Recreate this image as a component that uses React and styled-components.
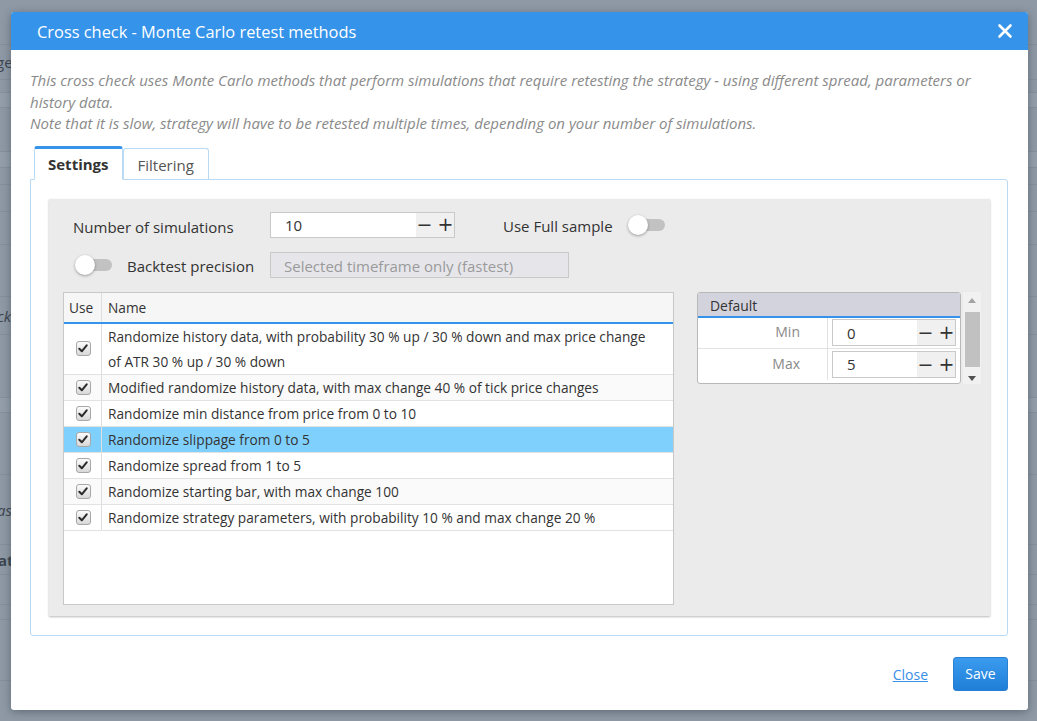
import React from "react";
import styled, { createGlobalStyle } from "styled-components";

const Global = createGlobalStyle`
  html, body { margin: 0; padding: 0; }
  body {
    width: 1037px; height: 721px; overflow: hidden;
    background: #8e99a5;
    font-family: "Open Sans", "Noto Sans", Arial, sans-serif;
    color: #333;
  }
  * { box-sizing: border-box; }
`;

const Screen = styled.div`
  position: relative;
  width: 1037px;
  height: 721px;
  overflow: hidden;
`;

const BehindPage = styled.div`
  display: flex;
  flex-direction: column;
  width: 1037px;
  height: 721px;
  background: #8e99a5;
`;

const BehindRow = styled.div`
  height: ${(p) => p.$h}px;
  flex: none;
  border-bottom: 1px solid #85909c;
  background: ${(p) => (p.$light ? "#939eaa" : "transparent")};
  display: flex;
  align-items: center;
  font-size: 15px;
  color: #3d4650;
  font-style: ${(p) => (p.$italic ? "italic" : "normal")};
  font-weight: ${(p) => (p.$bold ? 700 : 400)};
  white-space: nowrap;
`;

const BehindText = styled.span`
  margin-left: ${(p) => p.$x}px;
`;

const Overlay = styled.div`
  position: absolute;
  inset: 0;
  padding: 12px 9px 11px 11px;
`;

const Modal = styled.div`
  width: 1017px;
  height: 698px;
  background: #fff;
  border-radius: 3px;
  box-shadow: 0 2px 8px rgba(40, 50, 60, 0.45);
  display: flex;
  flex-direction: column;
  overflow: hidden;
`;

const Header = styled.div`
  height: 38px;
  flex: none;
  background: #3593e9;
  display: flex;
  align-items: center;
  justify-content: space-between;
  padding: 0 15px 0 26px;
`;

const Title = styled.div`
  color: #fff;
  font-size: 16.4px;
`;

const CloseX = styled.svg`
  width: 16px;
  height: 16px;
  display: block;
`;

const Body = styled.div`
  flex: 1;
  display: flex;
  flex-direction: column;
  padding: 20px 20px 0 19px;
`;

const Description = styled.div`
  font-size: 15px;
  font-style: italic;
  line-height: 21.5px;
  color: #8a8a8a;
  padding-right: 20px;
`;

const Tabs = styled.div`
  display: flex;
  margin: 11px 0 0 4px;
  align-items: flex-end;
  height: 33px;
`;

const Tab = styled.div`
  height: ${(p) => (p.$active ? 34 : 31)}px;
  padding: 0 ${(p) => (p.$active ? 13 : 14)}px;
  display: flex;
  align-items: center;
  font-size: 15px;
  font-weight: ${(p) => (p.$active ? 700 : 400)};
  color: ${(p) => (p.$active ? "#333" : "#555")};
  background: #fff;
  border: 1px solid #b9daf5;
  border-top: ${(p) => (p.$active ? "3px solid #3593e9" : "1px solid #b9daf5")};
  border-bottom: ${(p) => (p.$active ? "1px solid #fff" : "none")};
  border-radius: 3px 3px 0 0;
  margin-bottom: ${(p) => (p.$active ? -1 : 0)}px;
  position: relative;
  z-index: ${(p) => (p.$active ? 1 : 0)};
  padding-top: ${(p) => (p.$active ? 0 : 2)}px;
`;

const TabPanel = styled.div`
  height: 457px;
  flex: none;
  border: 1px solid #b9daf5;
  border-radius: 0 3px 3px 3px;
  padding: 19px 17px 19px 18px;
`;

const GrayPanel = styled.div`
  height: 100%;
  background: #ebebeb;
  box-shadow: 0 1px 2px rgba(0, 0, 0, 0.28);
  padding: 13px 8px 12px 14px;
  display: flex;
  flex-direction: column;
`;

const FormRow = styled.div`
  display: flex;
  align-items: center;
  height: 26px;
  margin-bottom: ${(p) => p.$mb || 0}px;
  padding-left: ${(p) => p.$pl || 0}px;
`;

const Label = styled.div`
  font-size: 15px;
  color: #333;
  width: ${(p) => (p.$w ? p.$w + "px" : "auto")};
  margin-left: ${(p) => p.$ml || 0}px;
  flex: none;
  padding-top: ${(p) => p.$pt ?? 2}px;
`;

const Spinner = styled.div`
  display: flex;
  width: ${(p) => p.$w}px;
  height: ${(p) => p.$h || 26}px;
  border: 1px solid #c9c9c9;
  background: #fff;
  flex: none;
`;

const SpinValue = styled.div`
  flex: 1;
  font-size: 15px;
  color: #333;
  padding-left: 14px;
  display: flex;
  align-items: center;
`;

const SpinButtons = styled.div`
  width: 38px;
  background: #f0f0f0;
  display: flex;
  align-items: center;
  justify-content: center;
  gap: 5px;
  font-size: 19px;
  color: #333;
  line-height: 1;
  font-family: "DejaVu Sans", sans-serif;
`;

const Toggle = styled.div`
  position: relative;
  width: 37px;
  height: 20px;
  flex: none;
  margin-left: ${(p) => p.$ml || 0}px;
  &::before {
    content: "";
    position: absolute;
    left: 2px;
    right: 0;
    top: 4px;
    height: 12px;
    border-radius: 6px;
    background: #c2c2c2;
  }
  &::after {
    content: "";
    position: absolute;
    left: 0;
    top: 0;
    width: 20px;
    height: 20px;
    border-radius: 50%;
    background: #fff;
    box-shadow: 0 1px 3px rgba(0, 0, 0, 0.35);
  }
`;

const DisabledSelect = styled.div`
  width: 299px;
  height: 26px;
  border: 1px solid #c9c9c9;
  background: #e6e6ea;
  color: #9a9a9a;
  font-size: 15px;
  display: flex;
  align-items: center;
  padding: 2px 0 0 13px;
  flex: none;
`;

const Lower = styled.div`
  flex: 1;
  display: flex;
  margin-top: 14px;
  align-items: flex-start;
`;

const Table = styled.div`
  width: 611px;
  height: 313px;
  border: 1px solid #c8c8c8;
  background: #fff;
  flex: none;
  display: flex;
  flex-direction: column;
`;

const HeadRow = styled.div`
  display: flex;
  height: 31px;
  background: #f6f6f6;
  border-bottom: 2px solid #3593e9;
  font-size: 13.7px;
  color: #333;
  flex: none;
`;

const HeadCell = styled.div`
  width: ${(p) => (p.$w ? p.$w + "px" : "auto")};
  flex: ${(p) => (p.$w ? "none" : 1)};
  display: flex;
  align-items: center;
  padding-left: ${(p) => p.$pl}px;
  padding-top: 1px;
  border-right: ${(p) => (p.$w ? "1px solid #dedede" : "none")};
`;

const Row = styled.div`
  display: flex;
  min-height: 26px;
  background: ${(p) => (p.$selected ? "#80d0fd" : p.$alt ? "#fafafa" : "#fff")};
  border-bottom: 1px solid #e2e2e2;
  font-size: 13.7px;
  color: #333;
  flex: none;
`;

const UseCell = styled.div`
  width: 38px;
  flex: none;
  display: flex;
  align-items: center;
  justify-content: center;
  border-right: 1px solid #dedede;
`;

const NameCell = styled.div`
  flex: 1;
  padding: 0 22px 0 6px;
  line-height: 25px;
  display: flex;
  align-items: center;
`;

const Check = styled.span`
  width: 15px;
  height: 15px;
  border: 1px solid #a8a8a8;
  border-radius: 3px;
  background: linear-gradient(#fbfbfb, #d8d8d8);
  display: flex;
  align-items: center;
  justify-content: center;
  margin-left: 1px;
`;

const Side = styled.div`
  display: flex;
  margin-left: 23px;
`;

const ParamBox = styled.div`
  width: 264px;
  border: 1px solid #b8b8b8;
  border-radius: 3px;
  background: #fff;
  overflow: hidden;
`;

const ParamHead = styled.div`
  height: 25px;
  background: #d3d3de;
  border-bottom: 2px solid #3593e9;
  font-size: 13.9px;
  color: #333;
  display: flex;
  align-items: center;
  padding: 3px 0 0 12px;
`;

const ParamRow = styled.div`
  display: flex;
  height: 31px;
  border-bottom: ${(p) => (p.$last ? "none" : "1px solid #e2e2e2")};
`;

const ParamLabel = styled.div`
  width: 130px;
  flex: none;
  border-right: 1px solid #e2e2e2;
  display: flex;
  align-items: center;
  justify-content: flex-end;
  padding: 0 27px 2px 0;
  font-size: 14px;
  color: #8a8a8a;
`;

const ParamValue = styled.div`
  flex: 1;
  display: flex;
  align-items: center;
  padding: 0 5px 0 4px;
`;

const Scrollbar = styled.div`
  width: 18px;
  height: 92px;
  margin-left: 2px;
  background: #f1f1f1;
  display: flex;
  flex-direction: column;
  align-items: center;
  justify-content: space-between;
  padding: 6px 0 3px;
`;

const Thumb = styled.div`
  width: 15px;
  height: 55px;
  background: #c1c1c1;
`;

const Arrow = styled.div`
  width: 0;
  height: 0;
  border-left: 4px solid transparent;
  border-right: 4px solid transparent;
  ${(p) =>
    p.$up
      ? "border-bottom: 5px solid #a3a3a3;"
      : "border-top: 5px solid #505050;"}
`;

const Footer = styled.div`
  display: flex;
  justify-content: flex-end;
  align-items: center;
  gap: 25px;
  margin-top: 21px;
`;

const LinkButton = styled.a`
  font-size: 14px;
  color: #3a8ee6;
  text-decoration: underline;
  cursor: pointer;
  padding-top: 2px;
`;

const SaveButton = styled.button`
  width: 55px;
  height: 34px;
  border: 1px solid #2a7fd3;
  border-radius: 3px;
  background: linear-gradient(#3a9bef, #1f7fd8);
  color: #fff;
  font-family: inherit;
  font-size: 14px;
  padding: 0;
`;

const CheckMark = () => (
  <svg width="10" height="9" viewBox="0 0 10 9">
    <path d="M1.3 4.8 L3.8 7.3 L8.7 1.3" fill="none" stroke="#2b2b2b" strokeWidth="2" strokeLinecap="round" strokeLinejoin="round" />
  </svg>
);

const rows = [
  "Randomize history data, with probability 30 % up / 30 % down and max price change of ATR 30 % up / 30 % down",
  "Modified randomize history data, with max change 40 % of tick price changes",
  "Randomize min distance from price from 0 to 10",
  "Randomize slippage from 0 to 5",
  "Randomize spread from 1 to 5",
  "Randomize starting bar, with max change 100",
  "Randomize strategy parameters, with probability 10 % and max change 20 %",
];

const behind = [
  { h: 45 },
  { h: 35, t: "ge", x: -4 },
  { h: 13 },
  { h: 15, light: true },
  { h: 44 },
  { h: 16, light: true },
  { h: 17 },
  { h: 27 },
  { h: 33 },
  { h: 52 },
  { h: 38, t: "ck", x: -3, italic: true },
  { h: 63 },
  { h: 15, light: true },
  { h: 62 },
  { h: 70, t: "as", x: -3, italic: true },
  { h: 30, t: "at", x: -2, bold: true },
  { h: 30 },
  { h: 15 },
  { h: 61 },
];

export default function App() {
  return (
    <>
      <Global />
      <Screen>
        <BehindPage>
          {behind.map((b, i) => (
            <BehindRow key={i} $h={b.h} $light={b.light} $italic={b.italic} $bold={b.bold}>
              {b.t && <BehindText $x={b.x}>{b.t}</BehindText>}
            </BehindRow>
          ))}
        </BehindPage>
        <Overlay>
          <Modal>
            <Header>
              <Title>Cross check - Monte Carlo retest methods</Title>
              <CloseX viewBox="0 0 16 16">
                <path d="M2.5 2.5 L13.5 13.5 M13.5 2.5 L2.5 13.5" stroke="#fff" strokeWidth="2.6" strokeLinecap="round" />
              </CloseX>
            </Header>
            <Body>
              <Description>
                This cross check uses Monte Carlo methods that perform simulations that require retesting the strategy - using different spread, parameters or history data.
                <br />
                Note that it is slow, strategy will have to be retested multiple times, depending on your number of simulations.
              </Description>
              <Tabs>
                <Tab $active>Settings</Tab>
                <Tab>Filtering</Tab>
              </Tabs>
              <TabPanel>
                <GrayPanel>
                  <FormRow $mb={14} $pl={10}>
                    <Label $w={197} $pt={4}>Number of simulations</Label>
                    <Spinner $w={185}>
                      <SpinValue>10</SpinValue>
                      <SpinButtons>
                        <span>−</span>
                        <span>+</span>
                      </SpinButtons>
                    </Spinner>
                    <Label $ml={48} $pt={3}>Use Full sample</Label>
                    <Toggle $ml={15} />
                  </FormRow>
                  <FormRow $pl={12}>
                    <Toggle />
                    <Label $ml={15} $w={143}>Backtest precision</Label>
                    <DisabledSelect>Selected timeframe only (fastest)</DisabledSelect>
                  </FormRow>
                  <Lower>
                    <Table>
                      <HeadRow>
                        <HeadCell $w={38} $pl={5}>Use</HeadCell>
                        <HeadCell $pl={6}>Name</HeadCell>
                      </HeadRow>
                      {rows.map((r, i) => (
                        <Row key={i} $selected={i === 3} $alt={i % 2 === 1}>
                          <UseCell>
                            <Check>
                              <CheckMark />
                            </Check>
                          </UseCell>
                          <NameCell>{r}</NameCell>
                        </Row>
                      ))}
                    </Table>
                    <Side>
                      <ParamBox>
                        <ParamHead>Default</ParamHead>
                        <ParamRow>
                          <ParamLabel>Min</ParamLabel>
                          <ParamValue>
                            <Spinner $w={124} $h={27}>
                              <SpinValue>0</SpinValue>
                              <SpinButtons>
                                <span>−</span>
                                <span>+</span>
                              </SpinButtons>
                            </Spinner>
                          </ParamValue>
                        </ParamRow>
                        <ParamRow $last>
                          <ParamLabel>Max</ParamLabel>
                          <ParamValue>
                            <Spinner $w={124} $h={27}>
                              <SpinValue>5</SpinValue>
                              <SpinButtons>
                                <span>−</span>
                                <span>+</span>
                              </SpinButtons>
                            </Spinner>
                          </ParamValue>
                        </ParamRow>
                      </ParamBox>
                      <Scrollbar>
                        <Arrow $up />
                        <Thumb />
                        <Arrow />
                      </Scrollbar>
                    </Side>
                  </Lower>
                </GrayPanel>
              </TabPanel>
              <Footer>
                <LinkButton>Close</LinkButton>
                <SaveButton>Save</SaveButton>
              </Footer>
            </Body>
          </Modal>
        </Overlay>
      </Screen>
    </>
  );
}
